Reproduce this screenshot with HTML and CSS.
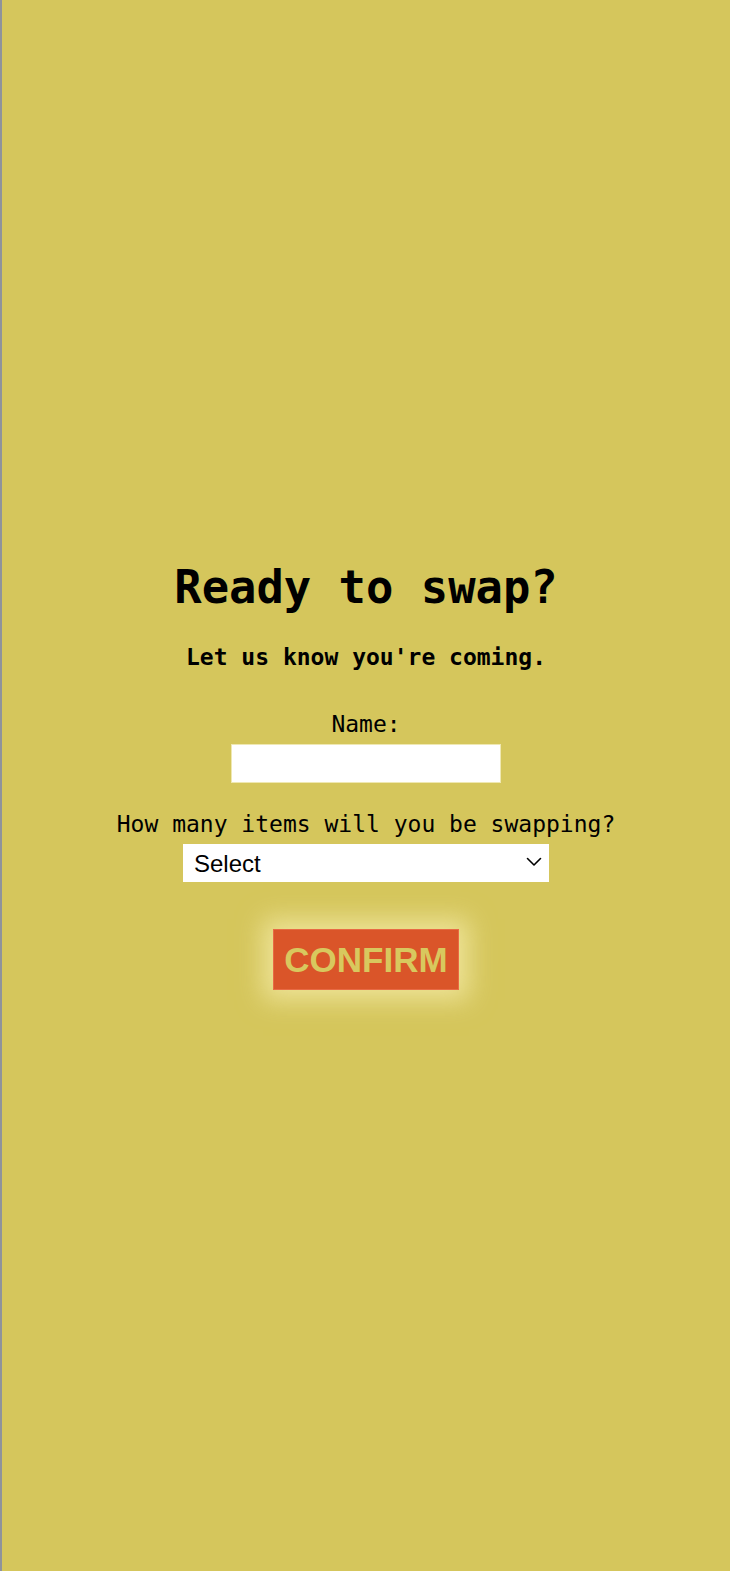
FILE: index.html
```
<!DOCTYPE html>
<html lang="en">
<head>
<meta charset="utf-8">
<title>Ready to swap?</title>
<link rel="stylesheet" href="styles.css">
</head>
<body>
<div class="page">
  <main class="rsvp">
    <h1 class="title">Ready to swap?</h1>
    <p class="subtitle">Let us know you're coming.</p>
    <form class="form">
      <label class="label" for="name">Name:</label>
      <input class="name-input" id="name" type="text">
      <label class="label label-items" for="items">How many items will you be swapping?</label>
      <span class="select-wrap">
        <select class="items-select" id="items">
          <option>Select</option>
          <option>1</option>
          <option>2</option>
          <option>3</option>
          <option>4</option>
          <option>5+</option>
        </select>
        <svg class="chevron" width="16" height="10" viewBox="0 0 16 10" aria-hidden="true">
          <path d="M1.5 1.5 L8 8 L14.5 1.5" fill="none" stroke="#000" stroke-width="1.6" stroke-linecap="round" stroke-linejoin="round"/>
        </svg>
      </span>
      <button class="confirm" type="button">CONFIRM</button>
    </form>
  </main>
</div>
</body>
</html>
```
FILE: styles.css
```
html, body {
  margin: 0;
  padding: 0;
}
body {
  background: #d5c65c;
}
.page {
  min-height: 1571px;
  box-sizing: border-box;
  border-left: 2px solid #8f939b;
  background: #d5c65c;
  font-family: "DejaVu Sans Mono", monospace;
  color: #000;
}
.rsvp {
  display: flex;
  flex-direction: column;
  align-items: center;
  padding-top: 561px;
}
.title {
  margin: 0;
  font-size: 45.5px;
  font-weight: bold;
  line-height: 53px;
}
.subtitle {
  margin: 30px 0 0;
  font-size: 23px;
  font-weight: bold;
  line-height: 27px;
}
.form {
  display: flex;
  flex-direction: column;
  align-items: center;
}
.label {
  margin-top: 40px;
  font-size: 23px;
  line-height: 27px;
}
.label-items {
  margin-top: 28px;
}
.name-input {
  margin-top: 6px;
  box-sizing: border-box;
  width: 270px;
  height: 39px;
  border: 1px solid #efe8b2;
  background: #fff;
  padding: 0 6px;
  font-size: 20px;
  outline: none;
}
.select-wrap {
  position: relative;
  display: block;
  margin-top: 6px;
  width: 366px;
  height: 38px;
}
.items-select {
  display: block;
  box-sizing: border-box;
  width: 366px;
  height: 38px;
  border: none;
  border-radius: 0;
  background-color: #fff;
  -webkit-appearance: none;
  appearance: none;
  font-family: "Liberation Sans", Arial, sans-serif;
  font-size: 24px;
  color: #000;
  padding: 0 30px 0 11px;
  outline: none;
}
.chevron {
  position: absolute;
  right: 7px;
  top: 13px;
  pointer-events: none;
}
.confirm {
  margin-top: 47px;
  box-sizing: border-box;
  height: 61px;
  padding: 0 10px;
  border: 1px solid #e86a44;
  background: #da5529;
  color: #d8c85e;
  font-family: "Liberation Sans", Arial, sans-serif;
  font-weight: bold;
  font-size: 35px;
  line-height: 59px;
  box-shadow: 0 0 24px 10px rgba(246, 236, 170, 0.75);
  cursor: pointer;
}
```
